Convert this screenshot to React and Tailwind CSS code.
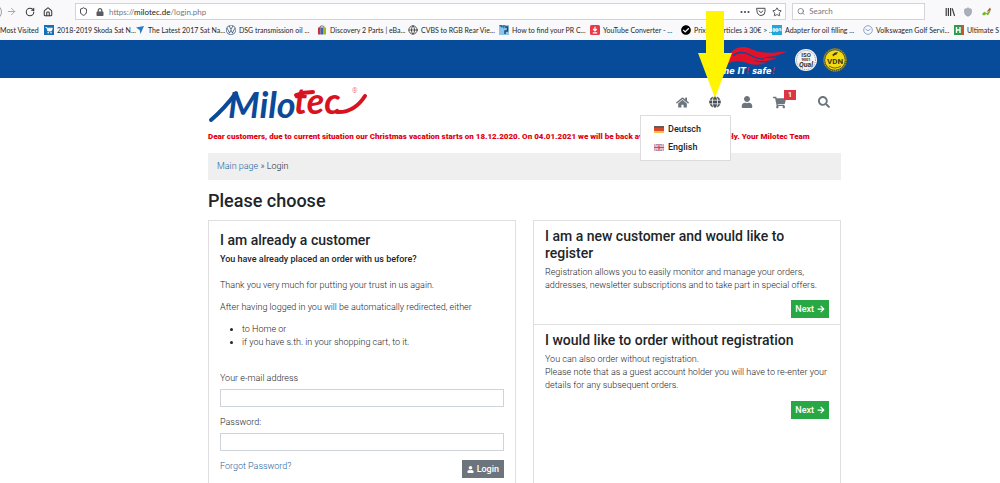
import React, { useState } from 'react';
import {
  FaArrowRight,
  FaCheckCircle,
  FaGlobe,
  FaHome,
  FaLock,
  FaSearch,
  FaShoppingCart,
  FaUser,
} from 'react-icons/fa';
import { SiVolkswagen } from 'react-icons/si';
import { ArrowRight, Globe, House, RotateCw, Search, Shield, Star } from 'lucide-react';

const bookmarks = [
  { label: '2018-2019 Skoda Sat N...', icon: <CartIcon /> },
  { label: 'The Latest 2017 Sat Na...', icon: <PlaneIcon /> },
  { label: 'DSG transmission oil ...', icon: <SiVolkswagen size={10} color="#42617f" /> },
  { label: 'Discovery 2 Parts | eBa...', icon: <BagIcon /> },
  { label: 'CVBS to RGB Rear Vie...', icon: <Globe size={10} color="#3c3c3c" /> },
  { label: 'How to find your PR C...', icon: <PrIcon /> },
  { label: 'YouTube Converter - ...', icon: <DownloadIcon /> },
  { label: 'Prix des articles à 30€ > ...', icon: <FaCheckCircle size={10} color="#000" /> },
  { label: 'Adapter for oil filling ...', icon: <OemIcon /> },
  { label: 'Volkswagen Golf Servi...', icon: <DialIcon /> },
  { label: 'Ultimate S', icon: <HIcon /> },
];

function CartIcon() {
  return (
    <svg width="10" height="10" viewBox="0 0 10 10">
      <rect width="10" height="10" fill="#1672b8" />
      <path d="M1.5 2.5h1.3l1 3.5h3.6l1-2.8H3.2" fill="#fff" stroke="#fff" strokeWidth=".8" />
      <circle cx="4.2" cy="7.8" r=".8" fill="#fff" />
      <circle cx="7" cy="7.8" r=".8" fill="#fff" />
    </svg>
  );
}

function PlaneIcon() {
  return (
    <svg width="10" height="10" viewBox="0 0 10 10">
      <path d="M1 2.5 9 1 5.5 9 4.6 5z" fill="#2b7cc0" />
    </svg>
  );
}

function BagIcon() {
  return (
    <svg width="10" height="10" viewBox="0 0 10 10">
      <path d="M3 3V1.5Q5 0 7 1.5V3" fill="none" stroke="#555" strokeWidth=".8" />
      <path d="M1 2.5h2.5V9.5H1z" fill="#c8313c" />
      <path d="M3.5 2.5h2.5v7H3.5z" fill="#3566b0" />
      <path d="M6 2.5h3v7H6z" fill="#a9b51e" />
    </svg>
  );
}

function PrIcon() {
  return (
    <svg width="10" height="10" viewBox="0 0 10 10">
      <rect width="10" height="10" fill="#8cc4e8" />
      <path d="M0 0h3l2 4 1-4H4.5L3 3z" fill="#1f6ea8" />
      <path d="M6 2h2.5v4H6v3" fill="none" stroke="#17456e" strokeWidth="1.4" />
    </svg>
  );
}

function DownloadIcon() {
  return (
    <svg width="10" height="10" viewBox="0 0 10 10">
      <rect width="10" height="10" rx="1.5" fill="#ea3a4a" />
      <path d="M5 1.8v3.6M3.2 4 5 5.8 6.8 4M2.8 7.8h4.4" fill="none" stroke="#fff" strokeWidth="1.2" />
    </svg>
  );
}

function OemIcon() {
  return (
    <svg width="10" height="10" viewBox="0 0 10 10">
      <rect width="10" height="10" fill="#22a7d8" />
      <path d="M1 5h8M1 3.7h2v2.6H1zM4 3.7h2v2.6H4zM7 3.7h2v2.6" fill="none" stroke="#fff" strokeWidth=".8" />
    </svg>
  );
}

function DialIcon() {
  return (
    <svg width="10" height="10" viewBox="0 0 10 10" fill="none" stroke="#7b9cc4" strokeWidth=".9">
      <circle cx="5" cy="5" r="4.3" />
      <path d="M2.5 4 5 5.8 7.5 4" />
    </svg>
  );
}

function HIcon() {
  return (
    <svg width="10" height="10" viewBox="0 0 10 10">
      <rect width="10" height="10" fill="#2f9a4c" />
      <rect x="8" width="2" height="10" fill="#c05a2e" />
      <path d="M2.5 2v6M6 2v6M2.5 5H6" stroke="#fff" strokeWidth="1.4" />
    </svg>
  );
}

function PocketIcon() {
  return (
    <svg width="10" height="10" viewBox="0 0 10 10" fill="none" stroke="#4a4a4f" strokeLinecap="round">
      <path d="M1 1.3h8v3.2a4 4 0 0 1-8 0z" />
      <path d="M3 3.8 5 5.7 7 3.8" />
    </svg>
  );
}

function LibraryIcon() {
  return (
    <svg width="10" height="10" viewBox="0 0 10 10" fill="none" stroke="#3c3c40" strokeWidth="1.2">
      <path d="M1.2 1v8M3.4 1v8M5.6 1v8M7.2 1.4 9.6 9" />
    </svg>
  );
}

function LeafIcon() {
  return (
    <svg width="11" height="11" viewBox="0 0 11 11">
      <path d="M1 8.5Q3 4.5 4.5 6.5T10 2Q9.5 7 7 9.5L5.5 8 3 9.5z" fill="#74b82f" />
      <path d="M5.5 6 9 1.5 9.8 4z" fill="#b5523a" />
    </svg>
  );
}

function GermanFlag() {
  return (
    <svg width="10" height="7" viewBox="0 0 10 7">
      <rect width="10" height="7" fill="#f4c542" />
      <rect width="10" height="5" fill="#d9482c" />
      <rect width="10" height="2" fill="#6a5a56" />
    </svg>
  );
}

function BritishFlag() {
  return (
    <svg width="10" height="7" viewBox="0 0 10 7">
      <rect width="10" height="7" fill="#6c7cb4" />
      <path d="M0 0 10 7M10 0 0 7" stroke="#fff" strokeWidth="1.6" />
      <path d="M0 0 10 7M10 0 0 7" stroke="#d8404e" strokeWidth=".6" />
      <path d="M5 0v7M0 3.5h10" stroke="#fff" strokeWidth="2.4" />
      <path d="M5 0v7M0 3.5h10" stroke="#d8404e" strokeWidth="1.3" />
    </svg>
  );
}

function MilotecLogo() {
  return (
    <svg
      className="overflow-visible"
      width="160"
      height="48"
      viewBox="0 0 160 48"
      fill="none"
      strokeLinecap="round"
      role="img"
      aria-label="Milotec"
    >
      <path d="M3 42Q16 31 28 15" stroke="#0b4a99" strokeWidth="4" />
      <g fontFamily="Lato, sans-serif" fontStyle="italic" fontWeight="700" fontSize="36">
        <text x="20" y="40" fill="#0b4a99">Milo</text>
        <text x="86" y="36" fill="#d8121f">tec</text>
      </g>
      <path d="M88 17Q96 14 105 14" stroke="#d8121f" strokeWidth="4" />
      <path d="M129 34Q146 35 157 18" stroke="#d8121f" strokeWidth="4" />
      <text x="144" y="15" fontSize="7" fill="#e0505a" fontFamily="Roboto, sans-serif">®</text>
    </svg>
  );
}

function TuneItSafeLogo() {
  return (
    <svg width="92" height="32" viewBox="0 0 92 32" role="img" aria-label="tune IT! safe!">
      <path
        d="M28 20C30 8 38 1 48 2C58 4 60 11 90 6C82 11 74 12 66 12C72 14 77 13 81 12C73 17 64 17 56 15C62 18 66 18 71 17C62 21 54 20 47 17C40 15 33 17 28 20Z"
        fill="#e2122b"
      />
      <path d="M36 11C41 6 48 7 53 10C58 13 62 14 67 14" fill="none" stroke="#064c9a" strokeWidth="1.4" />
      <text x="17" y="29" fontSize="8" fontWeight="700" fontStyle="italic" fill="#fff" fontFamily="'DejaVu Sans', sans-serif">
        tune IT<tspan fill="#e2122b">!</tspan> safe<tspan fill="#e2122b">!</tspan>
      </text>
    </svg>
  );
}

function IsoSeal() {
  return (
    <svg width="24" height="24" viewBox="0 0 24 24" role="img" aria-label="ISO 9001">
      <circle cx="12" cy="12" r="11" fill="#f4f4f4" />
      <circle cx="12" cy="12" r="9.5" fill="none" stroke="#777" strokeWidth=".8" strokeDasharray="1 1" />
      <g textAnchor="middle" fill="#333" fontFamily="Roboto, sans-serif" fontWeight="700">
        <text x="12" y="8.5" fontSize="6">ISO</text>
        <text x="12" y="13" fontSize="4">9001</text>
        <text x="12" y="19" fontSize="7" fontStyle="italic">Qual</text>
      </g>
    </svg>
  );
}

function VdnSeal() {
  return (
    <svg width="26" height="26" viewBox="0 0 26 26" role="img" aria-label="VDN">
      <circle cx="13" cy="13" r="12" fill="#4d5a3c" />
      <circle cx="13" cy="13" r="11" fill="none" stroke="#d6c733" strokeWidth="1" strokeDasharray="1 1" />
      <circle cx="13" cy="13" r="9.8" fill="#f3da12" />
      <path d="M10.5 7.5 13 5.5 16 5.2 14.5 7.5 12.5 8.2 11 9.5" fill="#3d3a12" />
      <text x="13" y="16.5" textAnchor="middle" fontSize="8" fontWeight="700" fill="#3d3a12" fontFamily="Roboto, sans-serif">VDN</text>
      <path d="M7 19q6 4 12 0" fill="none" stroke="#6c6616" />
    </svg>
  );
}

function YellowArrow() {
  return (
    <svg
      className="pointer-events-none absolute bottom-[10px] left-1/2 z-20 -translate-x-1/2"
      width="36"
      height="87"
      viewBox="0 0 36 87"
    >
      <path d="M9 0h18v42h8L18 87 1 42h8z" fill="#fff500" />
    </svg>
  );
}

const BrowserBar = () => (
  <div className="flex h-10 flex-col overflow-hidden bg-[#f9f9fb] font-[Lato,sans-serif] font-normal text-[#38383d]">
    <div className="flex h-5 shrink-0 items-end">
      <div className="flex h-[17px] w-[75px] shrink-0 items-center">
        <span className="-ml-[14px] h-4 w-4 rounded-full border border-gray-400" />
        <button aria-label="Forward" className="ml-1 text-gray-400"><ArrowRight size={11} /></button>
        <button aria-label="Reload" className="ml-2"><RotateCw size={10} strokeWidth={2.5} /></button>
        <button aria-label="Home" className="ml-2"><House size={10} strokeWidth={2.5} /></button>
      </div>
      <div className="flex h-[17px] flex-1 items-center border border-[#d4d4d8] bg-white pl-[3px] pr-[3px]">
        <Shield size={9} strokeWidth={2.5} />
        <FaLock size={8} className="ml-2 text-[#5a5a5f]" />
        <span className="ml-[5px] flex-1 text-[8px] leading-3 text-[#77777c]">
          https://<span className="text-[#18181b]">milotec.de</span>/login.php
        </span>
        <span className="flex items-center gap-[6px]">
          <svg width="10" height="10" viewBox="0 0 10 10" fill="#4a4a4f">
            <circle cx="1.5" cy="5" r="1.1" />
            <circle cx="5" cy="5" r="1.1" />
            <circle cx="8.5" cy="5" r="1.1" />
          </svg>
          <PocketIcon />
          <Star size={10} />
        </span>
      </div>
      <label className="ml-[6px] flex h-[17px] w-[133px] items-center border border-[#d4d4d8] bg-white pl-1">
        <Search size={9} className="text-[#5a5a5f]" />
        <input
          type="text"
          placeholder="Search"
          aria-label="Search"
          className="ml-1 w-full text-[8px] outline-none placeholder:text-[#77777c]"
        />
      </label>
      <div className="flex h-[17px] w-[75px] shrink-0 items-center gap-2 pl-5">
        <LibraryIcon />
        <Shield size={10} fill="#a9b0ba" color="#9aa2ae" />
        <LeafIcon />
      </div>
    </div>
    <nav className="flex flex-1 items-center whitespace-nowrap text-[7px] leading-3 text-[#1f1f24]">
      <a href="#most-visited" className="w-11 shrink-0">Most Visited</a>
      {bookmarks.map((b) => (
        <a key={b.label} href="#bookmark" className="flex w-[91px] shrink-0 items-center gap-[3px] last:w-auto">
          <span className="shrink-0">{b.icon}</span>
          {b.label}
        </a>
      ))}
    </nav>
  </div>
);

const LanguageMenu = () => (
  <ul className="absolute -right-[10px] top-[19px] z-10 w-[91px] border border-[#dcdcdc] bg-white px-[13px] py-1 text-[9px] font-medium leading-[18px] text-[#212529]">
    <li>
      <a href="#de" className="flex items-center gap-1"><GermanFlag />Deutsch</a>
    </li>
    <li>
      <a href="#en" className="flex items-center gap-1"><BritishFlag />English</a>
    </li>
  </ul>
);

const NextButton = () => (
  <button className="flex h-[18px] items-center gap-[3px] bg-[#28a745] px-1 text-[9px] font-medium text-white">
    Next <FaArrowRight size={8} />
  </button>
);

const App = () => {
  const [form, setForm] = useState({ email: '', password: '' });

  return (
    <div className="h-screen overflow-hidden bg-white font-[Roboto,sans-serif] text-[9px] font-light leading-[13px] text-[#212529]">
      <BrowserBar />

      <div className="bg-[#064c9a]">
        <div className="ml-[20.8%] mr-[15.2%] flex h-[38px] items-center justify-end gap-[5px]">
          <div className="mt-1"><TuneItSafeLogo /></div>
          <div className="flex items-center gap-1 pt-[2px]">
            <IsoSeal />
            <VdnSeal />
          </div>
        </div>
      </div>

      <div className="ml-[20.8%] mr-[15.9%]">
        <header className="flex h-12 items-center justify-between">
          <a href="#home"><MilotecLogo /></a>
          <nav className="flex items-center gap-5 pr-[11px] text-[#6c757d]">
            <a href="#home" aria-label="Home"><FaHome size={13} /></a>
            <div className="relative">
              <button aria-label="Language" className="block text-[#495057]"><FaGlobe size={12} /></button>
              <YellowArrow />
              <LanguageMenu />
            </div>
            <a href="#account" aria-label="Account"><FaUser size={12} /></a>
            <a href="#cart" aria-label="Cart" className="relative mr-3">
              <FaShoppingCart size={13} />
              <span className="absolute -top-[6px] left-[11px] bg-[#dc3545] px-1 text-[7px] font-bold leading-[10px] text-white">1</span>
            </a>
            <button aria-label="Search shop"><FaSearch size={12} /></button>
          </nav>
        </header>

        <p className="mt-1 whitespace-nowrap text-[8px] font-black text-[#e3000f]">
          Dear customers, due to current situation our Christmas vacation starts on 18.12.2020. On 04.01.2021 we will be
          back available to you immediately. Your Milotec Team
        </p>

        <div className="mt-[10px] bg-[#efefef] px-[9px] py-[7px]">
          <a href="#main" className="text-[#23639c]">Main page</a> » Login
        </div>

        <h1 className="mb-2 mt-[9px] text-[18px] font-medium leading-[23px]">Please choose</h1>

        <div className="grid grid-cols-2 gap-[17px]">
          <section className="border border-[#dfdfdf] px-[11px] pb-3 pt-[11px]">
            <h2 className="text-[14px] font-medium leading-[17px]">I am already a customer</h2>
            <p className="mt-1 font-medium">You have already placed an order with us before?</p>
            <p className="mt-[13px]">Thank you very much for putting your trust in us again.</p>
            <p className="mt-[9px]">After having logged in you will be automatically redirected, either</p>
            <ul className="mt-[9px] list-disc pl-[22px]">
              <li>to Home or</li>
              <li>if you have s.th. in your shopping cart, to it.</li>
            </ul>
            <form className="mt-[23px]" onSubmit={(e) => e.preventDefault()}>
              <label htmlFor="email" className="block">Your e-mail address</label>
              <input
                id="email"
                type="email"
                value={form.email}
                onChange={(e) => setForm((f) => ({ ...f, email: e.target.value }))}
                className="mt-1 block h-[18px] w-full border border-[#ced4da] px-1"
              />
              <label htmlFor="password" className="mt-[9px] block">Password:</label>
              <input
                id="password"
                type="password"
                value={form.password}
                onChange={(e) => setForm((f) => ({ ...f, password: e.target.value }))}
                className="mt-1 block h-[18px] w-full border border-[#ced4da] px-1"
              />
              <div className="mt-[9px] flex items-start justify-between">
                <a href="#forgot" className="text-[#23639c]">Forgot Password?</a>
                <button className="flex h-[18px] items-center gap-[3px] bg-[#6c757d] px-[5px] font-medium text-white">
                  <FaUser size={7} /> Login
                </button>
              </div>
            </form>
          </section>

          <div className="border border-[#dfdfdf]">
            <section className="border-b border-[#dfdfdf] px-[11px] pb-[6px] pt-[7px]">
              <h2 className="text-[14px] font-medium leading-[17px]">I am a new customer and would like to register</h2>
              <p className="mt-1">
                Registration allows you to easily monitor and manage your orders, addresses, newsletter subscriptions
                and to take part in special offers.
              </p>
              <div className="mt-2 flex justify-end"><NextButton /></div>
            </section>
            <section className="px-[11px] pt-[7px]">
              <h2 className="text-[14px] font-medium leading-[17px]">I would like to order without registration</h2>
              <p className="mt-1">
                You can also order without registration.
                <br />
                Please note that as a guest account holder you will have to re-enter your details for any subsequent
                orders.
              </p>
              <div className="mt-[9px] flex justify-end"><NextButton /></div>
            </section>
          </div>
        </div>
      </div>
    </div>
  );
};

export default App;
